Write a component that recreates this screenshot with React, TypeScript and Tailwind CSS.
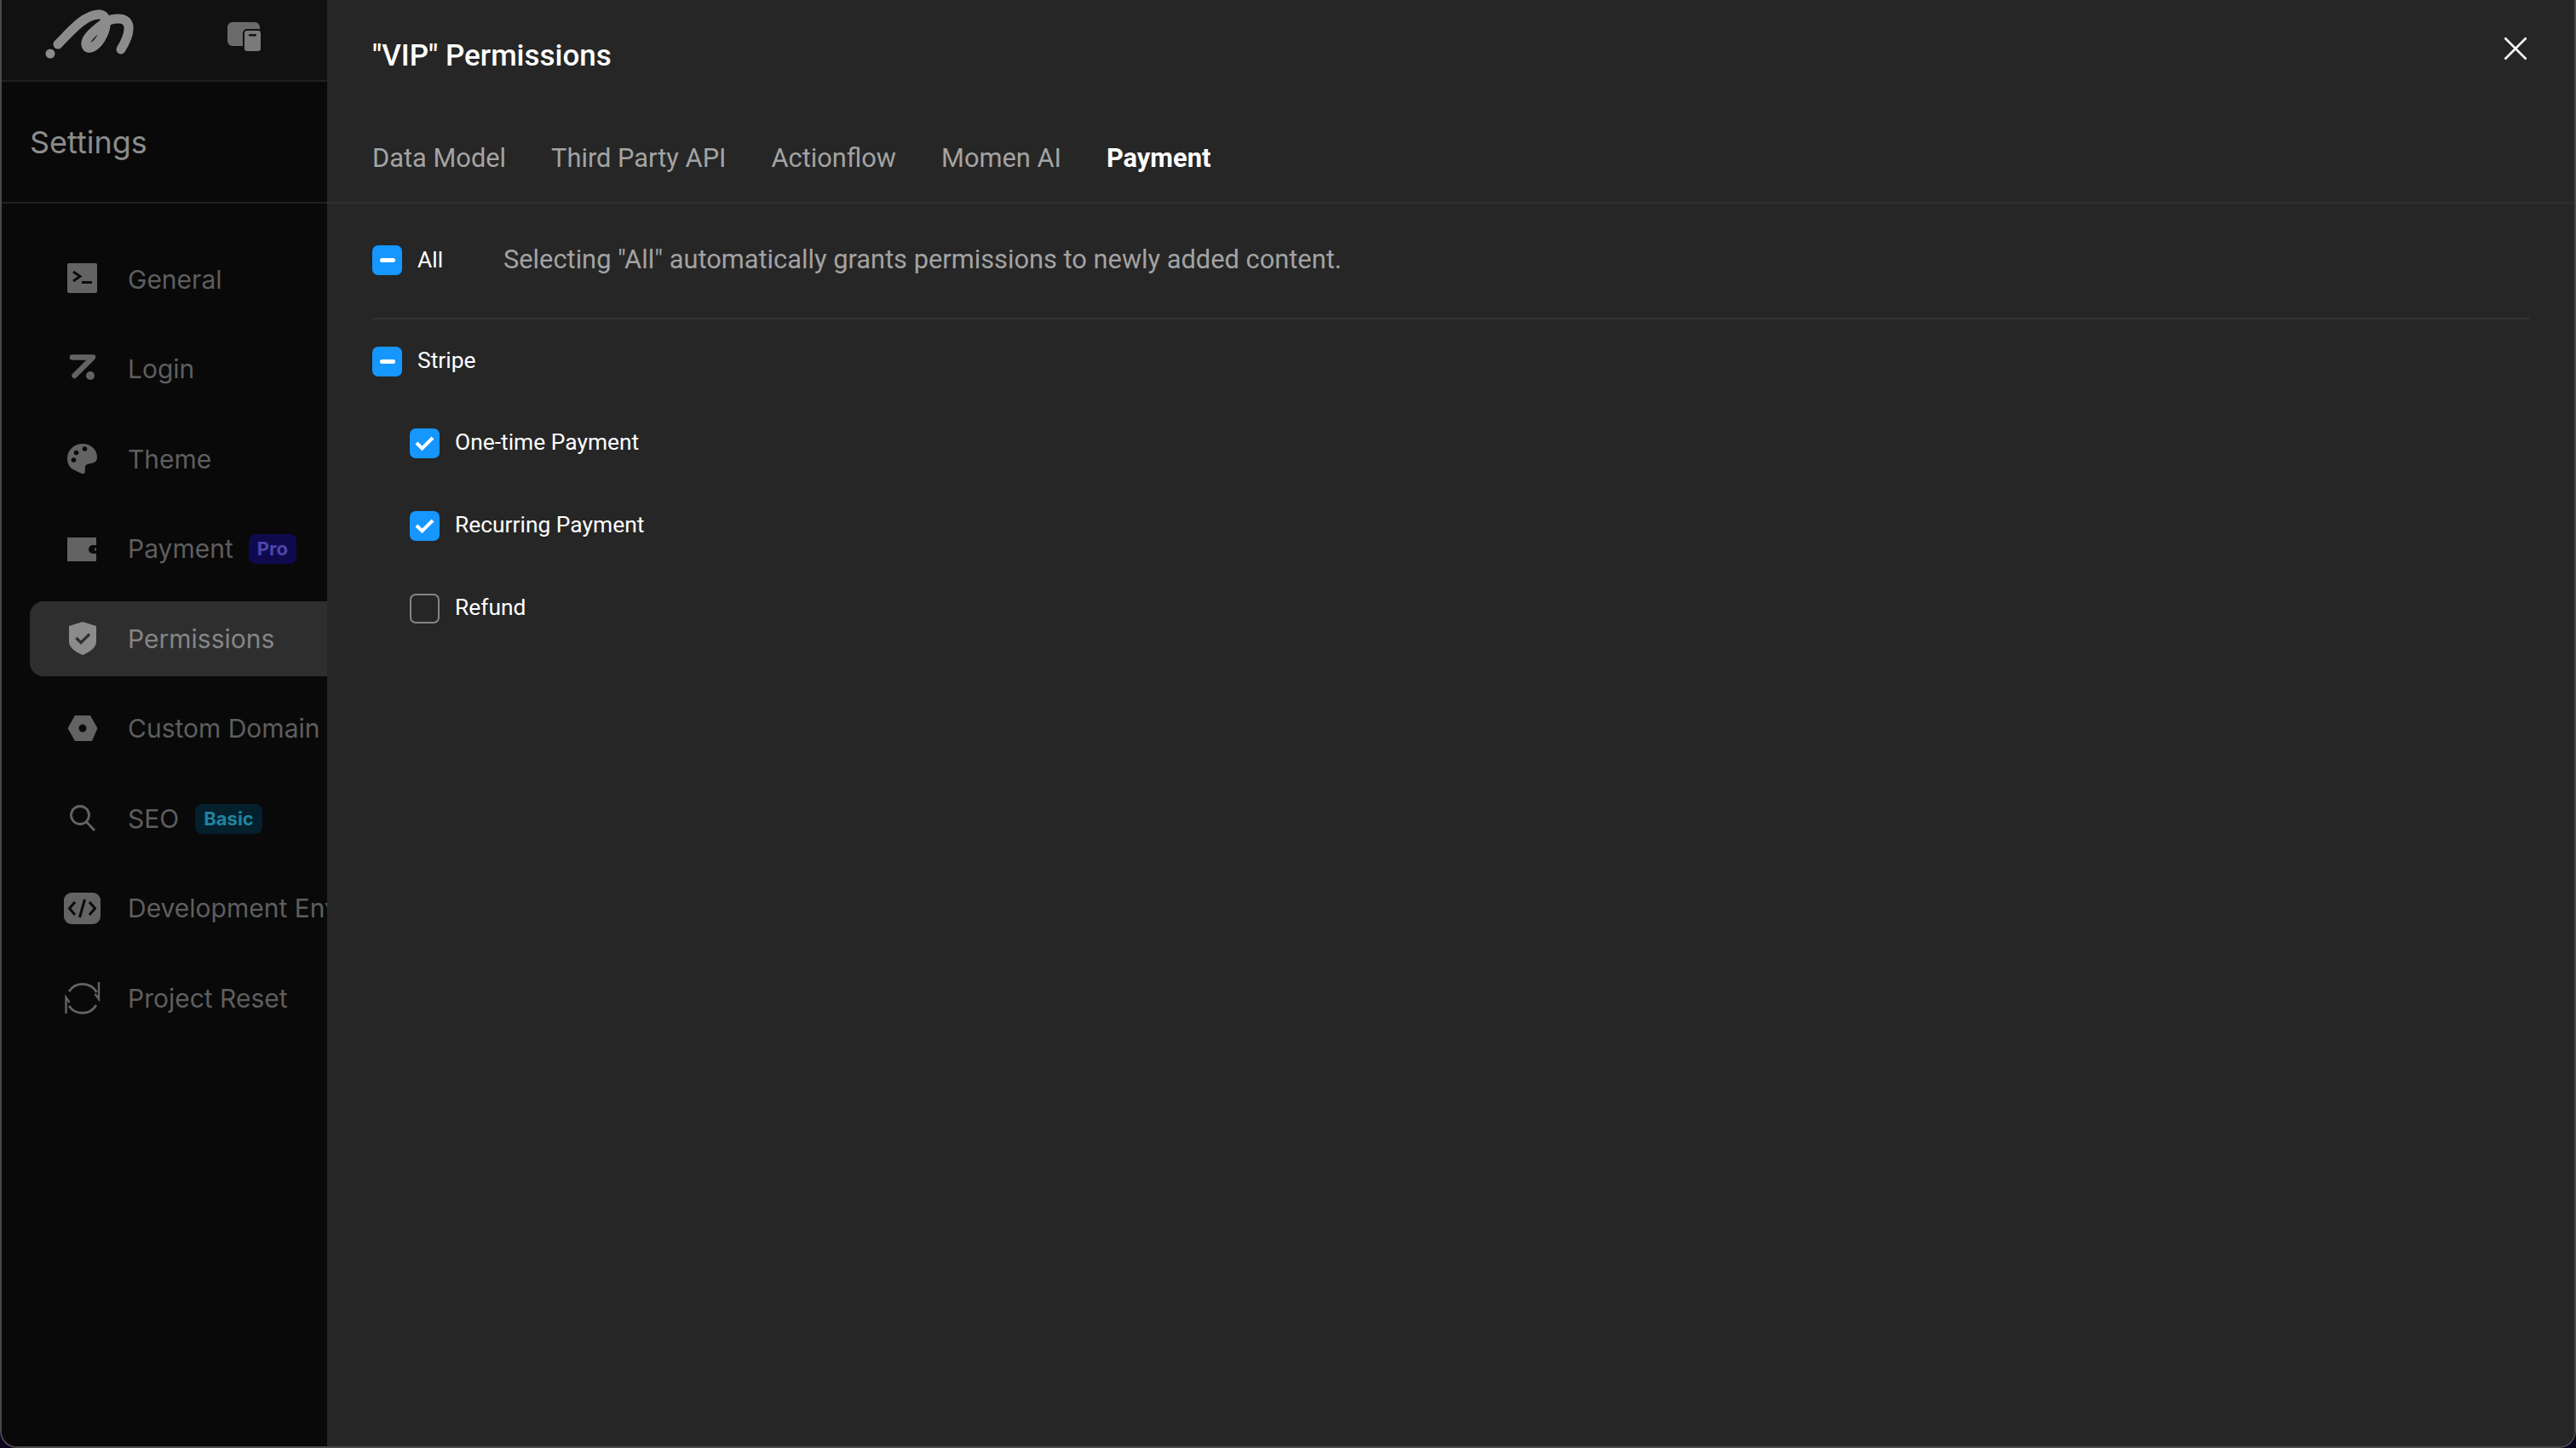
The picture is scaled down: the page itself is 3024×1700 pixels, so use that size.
import React from "react";

const G = "#636363";

const icons: Record<string, React.ReactNode> = {
  General: (
    <>
      <rect x="4" y="3" width="35" height="35" rx="2" fill={G} />
      <path d="M11 13l8 5.500-8 5.500" fill="none" stroke="#0a0a0a" strokeWidth="2.800" />
      <path d="M21 25.500h12" stroke="#0a0a0a" strokeWidth="3" />
    </>
  ),
  Login: (
    <>
      <path d="M10 7.500h24L12.500 29" fill="none" stroke={G} strokeWidth="6.500" strokeLinecap="round" strokeLinejoin="round" />
      <circle cx="31" cy="29" r="5" fill={G} />
    </>
  ),
  Theme: (
    <>
      <path d="M22 4C12 4 4 11.500 4 21c0 6 2.500 11 7.500 13.500 3 1.500 9 5 12 4.500 2-.5 1-5 1.500-8 .5-3 4-3.500 7-4 4-.7 7-2.500 7-7C39 11 32 4 22 4z" fill={G} />
      <circle cx="14.500" cy="14.500" r="2.800" fill="#0a0a0a" />
      <circle cx="24.500" cy="10" r="2.800" fill="#0a0a0a" />
      <circle cx="11.500" cy="23" r="2.800" fill="#0a0a0a" />
    </>
  ),
  Payment: (
    <path fillRule="evenodd" d="M4 8h34v9h-4a5 5 0 0 0 0 10h4v9H4zM35 20.500a1.500 1.500 0 1 1 0 3h3v-3z" fill={G} />
  ),
  Permissions: (
    <>
      <path d="M22 2l16 5v18c0 8-9 13-16 16-7-3-16-8-16-16V7z" fill="#8b8b8b" />
      <path d="M14.500 21l5.500 5.500 10-10" fill="none" stroke="#2e2e2e" strokeWidth="3.200" />
    </>
  ),
  "Custom Domain": (
    <path fillRule="evenodd" d="M13 6h18l8.500 15L33 36H13L4.500 21zM22 16.500a4.500 4.500 0 1 0 0 9 4.500 4.500 0 0 0 0-9z" fill={G} />
  ),
  SEO: (
    <>
      <circle cx="19" cy="18" r="10.500" fill="none" stroke={G} strokeWidth="2.800" />
      <path d="M26.500 26l9.500 10" stroke={G} strokeWidth="2.800" />
    </>
  ),
  "Development Environment": (
    <>
      <rect y="3" width="43" height="37" rx="9" fill={G} />
      <path d="M13 14l-6.500 7.500L13 29M30 14l6.500 7.500L30 29M24.500 11l-6 21" fill="none" stroke="#0a0a0a" strokeWidth="3" />
    </>
  ),
  "Project Reset": (
    <>
      <path d="M6 14A19 19 0 0 1 38.500 15M38 30A19 19 0 0 1 6 31" fill="none" stroke={G} strokeWidth="2.800" />
      <path d="M41 3v20l-4.500-6M2.500 40V21l4 6" fill="none" stroke={G} strokeWidth="2.400" />
    </>
  ),
};

const items: { name: string; badge?: "Pro" | "Basic" }[] = [
  { name: "General" },
  { name: "Login" },
  { name: "Theme" },
  { name: "Payment", badge: "Pro" },
  { name: "Permissions" },
  { name: "Custom Domain" },
  { name: "SEO", badge: "Basic" },
  { name: "Development Environment" },
  { name: "Project Reset" },
];

function Box({ state, className }: { state: "dash" | "check" | "off"; className?: string }) {
  if (state === "off")
    return <span className={`block h-[35px] w-[35px] shrink-0 rounded-[7px] border-2 border-[#858585] ${className ?? ""}`} />;
  return (
    <span className={`flex h-[35px] w-[35px] shrink-0 items-center justify-center rounded-[7px] bg-[#1597ff] ${className ?? ""}`}>
      {state === "dash" ? (
        <span className="block h-[5px] w-[18px] rounded-full bg-white" />
      ) : (
        <svg width="25" height="20" viewBox="0 0 25 20">
          <path d="M3 10l6.500 6.500L22 4" fill="none" stroke="#fff" strokeWidth="4" />
        </svg>
      )}
    </span>
  );
}

export default function App() {
  return (
    <div className="h-[1700px] w-[3024px] overflow-hidden bg-[#0c0420] font-['Roboto',sans-serif]">
      <div className="flex h-full w-full overflow-hidden rounded-b-[20px] border-x-2 border-b-2 border-[#4a4a4a]">
        <aside className="flex w-[382px] shrink-0 flex-col overflow-hidden bg-[#090909] font-['Inter',sans-serif]">
          <div className="flex h-[96px] shrink-0 items-center border-b-2 border-[#1f1f1f] bg-[#111111]">
            <svg width="382" height="94" viewBox="2 0 382 94" className="shrink-0">
              <circle cx="59" cy="63" r="5.500" fill="#8c8c8c" />
              <path
                d="M68 52C82 38 98 18 115 17c14-1 10 18 3 29-6 9-15 14-17 7-2-7 8-15 15-21 6-5 13-11 24-10C156 23 153 40 142 58"
                fill="none"
                stroke="#8c8c8c"
                strokeWidth="11"
                strokeLinecap="round"
              />
              <rect x="267" y="26" width="38" height="28" rx="6" fill="#6b6b6b" />
              <rect x="286" y="35" width="21" height="26" rx="4" fill="#7a7a7a" stroke="#111111" strokeWidth="2" />
              <rect x="292" y="40" width="9" height="2.500" rx="1" fill="#111111" />
            </svg>
          </div>
          <div className="flex h-[143px] shrink-0 items-center border-b-2 border-[#1f1f1f] pl-[33px] text-[36px] text-[#8c8c8c]">
            Settings
          </div>
          <nav className="flex flex-col gap-[17.5px] pl-[33px] pt-[45px]">
            {items.map((it) => {
              const active = it.name === "Permissions";
              return (
                <div
                  key={it.name}
                  className={`flex h-[88px] items-center whitespace-nowrap rounded-l-[16px] pl-[40px] text-[30px] ${
                    active ? "bg-[#2e2e2e] text-[#858585]" : "text-[#5e5e5e]"
                  }`}
                >
                  <svg width="44" height="44" viewBox="0 0 44 44" className="mr-[31px] shrink-0">
                    {icons[it.name]}
                  </svg>
                  <span>{it.name}</span>
                  {it.badge === "Pro" && (
                    <span className="ml-[18px] flex h-[35px] items-center rounded-[8px] bg-[#0f0a4d] px-[10px] text-[22px] font-bold text-[#4d45ab]">
                      Pro
                    </span>
                  )}
                  {it.badge === "Basic" && (
                    <span className="ml-[19px] flex h-[35px] items-center rounded-[8px] bg-[#04202d] px-[10px] text-[22px] font-bold text-[#23829f]">
                      Basic
                    </span>
                  )}
                </div>
              );
            })}
          </nav>
        </aside>
        <main className="flex min-w-0 flex-1 flex-col bg-[#262626]">
          <header className="flex h-[239px] shrink-0 flex-col border-b-2 border-[#303030] pl-[53px]">
            <div className="flex items-start justify-between pr-[55px]">
              <h1 className="pt-[44px] text-[35px] font-medium leading-[44px] text-white">"VIP" Permissions</h1>
              <svg width="28" height="28" viewBox="0 0 28 28" className="mt-[43px]">
                <path d="M1.500 1.500l25 25M26.500 1.500l-25 25" stroke="#fff" strokeWidth="2.500" />
              </svg>
            </div>
            <div className="mt-[76px] flex gap-[53px] text-[30.8px] leading-[44px] text-[#a3a3a3]">
              <span>Data Model</span>
              <span>Third Party API</span>
              <span>Actionflow</span>
              <span>Momen AI</span>
              <span className="font-bold text-white">Payment</span>
            </div>
          </header>
          <section className="px-[53px] text-[26.4px] text-white">
            <div className="flex h-[136px] items-center border-b-2 border-[#333333] pb-[1px]">
              <Box state="dash" />
              <span className="ml-[18px] w-[101px]">All</span>
              <span className="text-[30.8px] text-[#a3a3a3]">Selecting "All" automatically grants permissions to newly added content.</span>
            </div>
            <div className="mt-[31px] flex h-[36px] items-center">
              <Box state="dash" />
              <span className="ml-[18px]">Stripe</span>
            </div>
            <div className="ml-[44px] mt-[60px] flex flex-col gap-[61px]">
              {[
                ["One-time Payment", "check"],
                ["Recurring Payment", "check"],
                ["Refund", "off"],
              ].map(([label, st]) => (
                <div key={label} className="flex h-[36px] items-center">
                  <Box state={st as "check" | "off"} />
                  <span className="ml-[18px]">{label}</span>
                </div>
              ))}
            </div>
          </section>
        </main>
      </div>
    </div>
  );
}
